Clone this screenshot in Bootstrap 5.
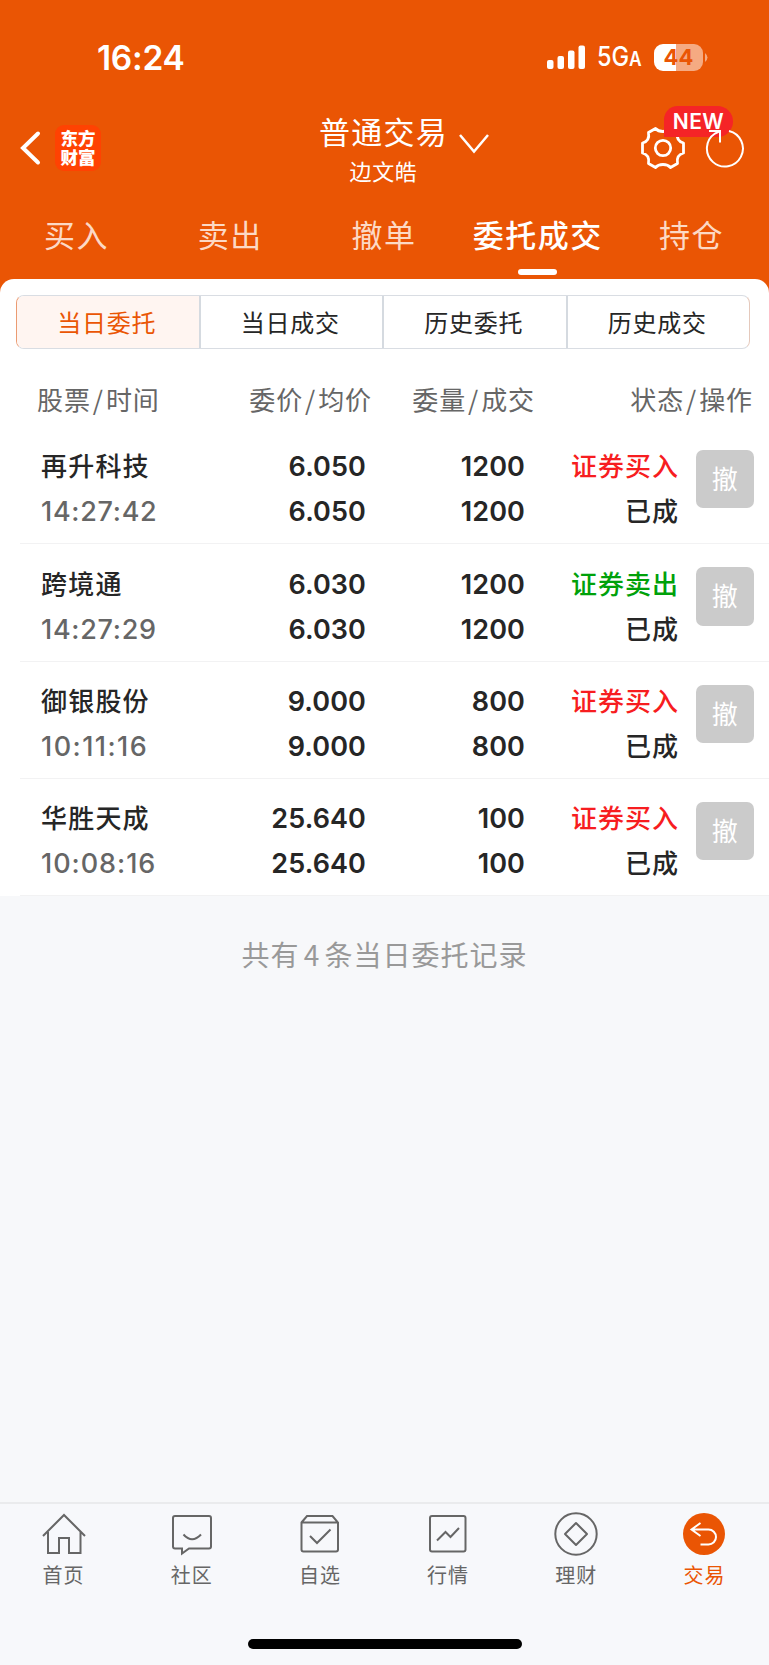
<!DOCTYPE html>
<html lang="zh-CN">
<head>
<meta charset="utf-8">
<meta name="viewport" content="width=device-width, initial-scale=1">
<title>委托成交</title>
<link href="https://cdn.jsdelivr.net/npm/bootstrap@5.3.0/dist/css/bootstrap.min.css" rel="stylesheet">
<style>
:root{--brand:#ea5504}
body{font-family:Inter,"Noto Sans CJK SC",sans-serif;background:#f7f8fa;color:#262626;min-height:1665px}
svg{display:block;flex:none}
.cjk{font-family:"Noto Sans CJK SC",sans-serif}
.top-area{background:var(--brand);color:#fff;height:293px}
.status-bar{height:114px;padding:0 61px 0 97px}
.clock{font-size:33.500px;font-weight:600;line-height:40px;margin-top:38px;letter-spacing:-.3px}
.status-right{margin-top:43px;height:29px}
.net{font-size:27px;font-weight:500;line-height:29px;width:44px;margin:0 12px 0 12px}
.net span{display:inline-block;transform:scaleX(.87);transform-origin:left;white-space:nowrap}
.net small{font-size:20px;font-weight:600}
.battery{width:49px;height:27px;border-radius:9px;background:linear-gradient(90deg,#fff 44%,#f5aa82 44%);color:var(--brand);font-size:22px;font-weight:700;line-height:27px;margin-left:1px}
.title-bar{height:84px}
.title-bar .side{width:200px}
.logo{width:46px;height:46px;border-radius:9px;background:#ff4202;font-size:17.500px;font-weight:900;line-height:19px;padding-top:3px}
.title-main{font-size:31px;line-height:36px;letter-spacing:1.200px;margin:-1px 2px 0 0}
.title-sub{font-size:22px;line-height:30px;letter-spacing:.6px;margin:6px 2px 0 0}
.title-arrow{left:139px;top:19px}
.new-tag{right:36px;top:-8px;width:69px;height:31px;background:#f52427;border-radius:14px 16px 16px 0;font-size:21px;font-weight:600;line-height:31px;letter-spacing:.5px;font-family:Inter,sans-serif}
.main-tabs{height:81px}
.main-tabs .tab-item{font-size:31px;letter-spacing:1.500px;line-height:40px;padding:16px 1px 0 0;height:81px;color:#fcd9c5;flex:1 1 0;text-align:center}
.main-tabs .on{color:#fff;font-weight:500}
.main-tabs .on i{display:block;width:39px;height:6px;border-radius:3px;background:#fff;margin:15px auto 0}
.panel{background:#fff;border-radius:14px 14px 0 0;margin-top:-14px;padding-top:16px;height:617px}
.seg{height:54px;margin:0 19px 0 16px;border:1.500px solid #d9dde3;border-radius:8px;overflow:hidden;border-left-color:#eb9b72;border-right-color:#e5c9bc}
.seg div{flex:1 1 0;text-align:center;font-size:24px;letter-spacing:.8px;line-height:51px;padding-right:2px;border-left:2px solid #d5dae0}
.seg div:first-child{border:0;color:var(--brand);background:#fff5f1}
.head-grid{display:grid;grid-template-columns:160px 175px 163px 1fr;padding:0 16px 0 37px;height:78px;font-size:26px;letter-spacing:.9px;line-height:100px;color:#666;text-align:right}
.head-grid :first-child{text-align:left}
.head-grid b{font-weight:400;margin:0 2px}
.order{font-family:Inter,"Noto Sans CJK SC",sans-serif;margin-left:20px;padding:17.400px 15px 0 21px;height:117.300px;border-bottom:1.500px solid #f2f2f3;display:grid;grid-template-columns:150px 1fr 159px 154px 75px;line-height:45px;font-size:26px;text-align:right}
.order .num{font-size:27px;font-weight:600;letter-spacing:.1px}
.order .name{text-align:left;letter-spacing:1.200px;font-weight:500}
.order .time{font-size:27px;color:#666;font-weight:550}
.order .st{letter-spacing:1px;font-weight:500}
.buy{color:#f71d20}.sell{color:#00a10a}
.undo{width:58.500px;height:58.500px;border-radius:7px;background:#cbcbcb;color:#fff;font-size:26px;line-height:60px;text-align:center;margin:5.600px 0 0 auto}
.summary{font-size:28px;letter-spacing:1px;word-spacing:-3px;color:#999;text-align:center;line-height:40px;margin-top:38px}
.bottom-nav{height:163px;border-top:2px solid #eaebed;background:#f7f8fb;position:fixed;left:0;right:0;bottom:0}
.bottom-nav .nav-cell{flex:1 1 0;font-size:20px;letter-spacing:1px;line-height:26px;color:#666;padding-right:1px}
.nav-cell svg{fill:none;stroke:#666;stroke-width:2;margin-top:8px;margin-bottom:4px}
.bottom-nav .now{color:var(--brand)}
.home-bar{width:274px;height:10px;border-radius:5px;background:#000;margin:51px auto 0}
</style>
</head>
<body>
<header class="top-area">
  <div class="status-bar d-flex justify-content-between">
    <div class="clock">16:24</div>
    <div class="status-right d-flex align-items-center">
      <svg width="38" height="25" fill="#fff"><rect y="15" width="6.5" height="9" rx="2"/><rect x="10.5" y="11" width="6.5" height="13" rx="2"/><rect x="21" y="5.500" width="6.500" height="18.500" rx="2"/><rect x="31.500" y="0.500" width="6.500" height="23.500" rx="2"/></svg>
      <div class="net"><span>5G<small>A</small></span></div>
      <div class="battery text-center">44</div>
      <svg width="5" height="9"><path d="M2 0Q7 4.500 2 9Z" fill="#f5aa82"/></svg>
    </div>
  </div>
  <div class="title-bar d-flex justify-content-between">
    <div class="side d-flex align-items-start ps-3">
      <svg class="ms-1 mt-3" width="22" height="36"><path d="M18 3.500 3 18l15 14.500" fill="none" stroke="#fff" stroke-width="4" stroke-linecap="round"/></svg>
      <div class="logo cjk text-center" style="margin:11px 0 0 13px">东方<br>财富</div>
    </div>
    <div class="position-relative text-center cjk">
      <div class="title-main">普通交易</div><div class="title-sub">边文皓</div>
      <svg class="position-absolute title-arrow" width="32" height="22"><path d="M2 2 16 18.500 30 2" fill="none" stroke="#fff" stroke-width="2.500"/></svg>
    </div>
    <div class="side position-relative d-flex justify-content-end">
      <svg width="46" height="46" viewBox="-23 -23 46 46" style="margin:11px 18px 0 0" fill="none" stroke="#fff" stroke-width="2.800" stroke-linejoin="round"><path d="M-7.500 -19.500Q-5 -16.500 0 -16.500T7.500 -19.500L14.500 -15.500Q13 -7 20.500 -5V5Q13 7 14.500 15.500L7.500 19.500Q5 16.500 0 16.500T-7.500 19.500L-14.500 15.500Q-13 7 -20.500 5V-5Q-13 -7 -14.500 -15.500Z"/><circle r="7.700"/></svg>
      <div class="new-tag position-absolute text-center">NEW</div>
      <svg class="position-relative" width="42" height="46" style="margin:11px 23px 0 0" fill="none" stroke="#fff" stroke-width="2"><path d="M25 6A18 18 0 1 1 11 8.500L16 6M5 6H16V17.500"/></svg>
    </div>
  </div>
  <nav class="main-tabs d-flex cjk">
    <div class="tab-item">买入</div><div class="tab-item">卖出</div><div class="tab-item">撤单</div><div class="tab-item on">委托成交<i></i></div><div class="tab-item">持仓</div>
  </nav>
</header>
<main class="cjk">
  <section class="panel">
    <div class="seg d-flex"><div>当日委托</div><div>当日成交</div><div>历史委托</div><div>历史成交</div></div>
    <div class="head-grid"><span>股票<b>/</b>时间</span><span>委价<b>/</b>均价</span><span>委量<b>/</b>成交</span><span>状态<b>/</b>操作</span></div>
    <div id="orders"></div>
  </section>
  <div class="summary">共有 4 条当日委托记录</div>
</main>
<footer class="bottom-nav cjk">
  <div class="d-flex text-center">
    <div class="nav-cell d-flex flex-column align-items-center"><svg width="46" height="46"><path d="M2 24 23 3 44 24M7 20V41H18V26H28V41H39.500V20"/></svg>首页</div>
    <div class="nav-cell d-flex flex-column align-items-center"><svg width="46" height="46"><path d="M6 4H40a2 2 0 0 1 2 2V34.500a2 2 0 0 1-2 2H20L13 41.500V36.500H6a2 2 0 0 1-2-2V6a2 2 0 0 1 2-2ZM14.500 22.500Q23 32 32 22.500"/></svg>社区</div>
    <div class="nav-cell d-flex flex-column align-items-center"><svg width="46" height="46"><path d="M4.500 10.500 10 4H35.500L41 10.500V37.500a2 2 0 0 1-2 2H6.500a2 2 0 0 1-2-2ZM4.500 10.500H41M13 24 20 31 33.500 17.500"/></svg>自选</div>
    <div class="nav-cell d-flex flex-column align-items-center"><svg width="46" height="46"><rect x="5" y="4" width="35.500" height="35.500" rx="2"/><path d="M12 28.500 20.500 20 25.500 25 34 16"/></svg>行情</div>
    <div class="nav-cell d-flex flex-column align-items-center"><svg width="46" height="46"><circle cx="23" cy="22" r="20.700"/><path d="M23 11 34 22 23 33 12 22Z" stroke-linejoin="round"/></svg>理财</div>
    <div class="nav-cell now d-flex flex-column align-items-center"><svg width="46" height="46"><circle cx="23" cy="22" r="21" fill="#ea5504" stroke="none"/><path d="M19.500 11 10.500 17.500 19.500 24M10.500 17.500H27.500a7.500 7.500 0 0 1 0 15H19.500" stroke="#fff" stroke-width="2"/></svg>交易</div>
  </div>
  <div class="home-bar"></div>
</footer>
<script>
const rows=[["再升科技","14:27:42","6.050","1200","买入"],["跨境通","14:27:29","6.030","1200","卖出"],["御银股份","10:11:16","9.000","800","买入"],["华胜天成","10:08:16","25.640","100","买入"]];
// the digit 1 is narrow, so times holding more of them are tracked wider
const track=t=>(.45+.25*(t.split("1").length-1)).toFixed(2);
document.getElementById("orders").innerHTML=rows.map(([n,t,p,q,s])=>`<div class="order"><div class="name">${n}<div class="time" style="letter-spacing:${track(t)}px">${t}</div></div><div class="num">${p}<br>${p}</div><div class="num">${q}<br>${q}</div><div class="st"><span class="${s==="买入"?"buy":"sell"}">证券${s}</span><br>已成</div><div><div class="undo">撤</div></div></div>`).join("");
</script>
<script src="https://cdn.jsdelivr.net/npm/bootstrap@5.3.0/dist/js/bootstrap.bundle.min.js"></script>
</body>
</html>
